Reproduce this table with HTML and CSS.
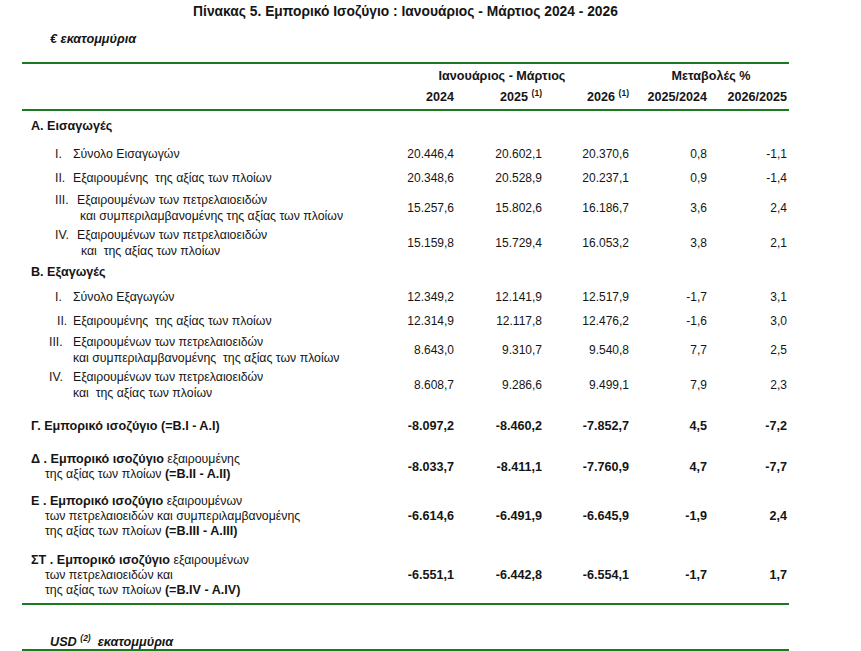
FILE: index.html
```html
<!DOCTYPE html>
<html lang="el">
<head>
<meta charset="utf-8">
<link rel="stylesheet" href="styles.css">
</head>
<body>
<div class="page">
  <h1 class="title">Πίνακας 5. Εμπορικό Ισοζύγιο : Ιανουάριος - Μάρτιος 2024 - 2026</h1>
  <div class="unit">€ εκατομμύρια</div>
  <div class="table">
    <div class="row head1">
      <div></div>
      <div class="span3">Ιανουάριος - Μάρτιος</div>
      <div class="span2">Μεταβολές %</div>
    </div>
    <div class="row head2">
      <div></div>
      <div class="num">2024</div>
      <div class="num">2025 <sup>(1)</sup></div>
      <div class="num">2026 <sup>(1)</sup></div>
      <div class="num">2025/2024</div>
      <div class="num">2026/2025</div>
    </div>

    <div class="row sec h-a"><div class="lab b">Α. Εισαγωγές</div></div>
    <div class="row h-24"><div class="lab item"><span class="rn">I.</span><span>Σύνολο Εισαγωγών</span></div><div class="num">20.446,4</div><div class="num">20.602,1</div><div class="num">20.370,6</div><div class="num">0,8</div><div class="num">-1,1</div></div>
    <div class="row h-24"><div class="lab item"><span class="rn">II.</span><span>Εξαιρουμένης&nbsp; της αξίας των πλοίων</span></div><div class="num">20.348,6</div><div class="num">20.528,9</div><div class="num">20.237,1</div><div class="num">0,9</div><div class="num">-1,4</div></div>
    <div class="row h-36"><div class="lab item"><span class="rn">III.</span><span class="txt"><span class="l1">Εξαιρουμένων των πετρελαιοειδών</span><span class="l2">και συμπεριλαμβανομένης της αξίας των πλοίων</span></span></div><div class="num">15.257,6</div><div class="num">15.802,6</div><div class="num">16.186,7</div><div class="num">3,6</div><div class="num">2,4</div></div>
    <div class="row h-33"><div class="lab item"><span class="rn">IV.</span><span class="txt"><span class="l1">Εξαιρουμένων των πετρελαιοειδών</span><span class="l2 l2b">και&nbsp; της αξίας των πλοίων</span></span></div><div class="num">15.159,8</div><div class="num">15.729,4</div><div class="num">16.053,2</div><div class="num">3,8</div><div class="num">2,1</div></div>

    <div class="row sec h-26"><div class="lab b">Β. Εξαγωγές</div></div>
    <div class="row h-24"><div class="lab item"><span class="rn">I.</span><span>Σύνολο Εξαγωγών</span></div><div class="num">12.349,2</div><div class="num">12.141,9</div><div class="num">12.517,9</div><div class="num">-1,7</div><div class="num">3,1</div></div>
    <div class="row h-24"><div class="lab item"><span class="rn rn-r">II.</span><span>Εξαιρουμένης&nbsp; της αξίας των πλοίων</span></div><div class="num">12.314,9</div><div class="num">12.117,8</div><div class="num">12.476,2</div><div class="num">-1,6</div><div class="num">3,0</div></div>
    <div class="row h-34"><div class="lab item"><span class="rn rn-l">III.</span><span class="txt"><span>Εξαιρουμένων των πετρελαιοειδών</span><span>και συμπεριλαμβανομένης&nbsp; της αξίας των πλοίων</span></span></div><div class="num">8.643,0</div><div class="num">9.310,7</div><div class="num">9.540,8</div><div class="num">7,7</div><div class="num">2,5</div></div>
    <div class="row h-36"><div class="lab item"><span class="rn rn-l">IV.</span><span class="txt"><span>Εξαιρουμένων των πετρελαιοειδών</span><span>και&nbsp; της αξίας των πλοίων</span></span></div><div class="num">8.608,7</div><div class="num">9.286,6</div><div class="num">9.499,1</div><div class="num">7,9</div><div class="num">2,3</div></div>

    <div class="row bold h-46"><div class="lab">Γ. Εμπορικό ισοζύγιο (=B.I - A.I)</div><div class="num">-8.097,2</div><div class="num">-8.460,2</div><div class="num">-7.852,7</div><div class="num">4,5</div><div class="num">-7,2</div></div>
    <div class="row bold h-36"><div class="lab multi"><span><b>Δ . Εμπορικό ισοζύγιο</b> εξαιρουμένης</span><span class="cont">της αξίας των πλοίων <b>(=B.II - A.II)</b></span></div><div class="num">-8.033,7</div><div class="num">-8.411,1</div><div class="num">-7.760,9</div><div class="num">4,7</div><div class="num">-7,7</div></div>
    <div class="row bold h-62"><div class="lab multi"><span><b>Ε . Εμπορικό ισοζύγιο</b> εξαιρουμένων</span><span class="cont">των πετρελαιοειδών και συμπεριλαμβανομένης</span><span class="cont">της αξίας των πλοίων <b>(=B.III - A.III)</b></span></div><div class="num">-6.614,6</div><div class="num">-6.491,9</div><div class="num">-6.645,9</div><div class="num">-1,9</div><div class="num">2,4</div></div>
    <div class="row bold h-56"><div class="lab multi"><span><b>ΣΤ . Εμπορικό ισοζύγιο</b> εξαιρουμένων</span><span class="cont">των πετρελαιοειδών και</span><span class="cont">της αξίας των πλοίων <b>(=B.IV - A.IV)</b></span></div><div class="num">-6.551,1</div><div class="num">-6.442,8</div><div class="num">-6.554,1</div><div class="num">-1,7</div><div class="num">1,7</div></div>
  </div>
  <div class="unit usd">USD <sup>(2)</sup>&nbsp; εκατομμύρια</div>
</div>
</body>
</html>
```

FILE: styles.css
```css
html, body {
  margin: 0;
  padding: 0;
  background: #fff;
}
body {
  font-family: "Liberation Sans", Arial, sans-serif;
  font-size: 12px;
  color: #151515;
  width: 861px;
  height: 651px;
  overflow: hidden;
}
b {
  font-size: 12.6px;
}
.page {
  padding-left: 22px;
  width: 767px;
}
.title {
  margin: 0;
  height: 24px;
  line-height: 24px;
  font-size: 13.8px;
  font-weight: bold;
  text-align: center;
}
.unit {
  height: 30px;
  line-height: 30px;
  padding-left: 28px;
  font-weight: bold;
  font-style: italic;
  font-size: 12.7px;
}
.unit sup {
  font-size: 8.5px;
  vertical-align: 5px;
  line-height: 0;
}
.table {
  margin-top: 8px;
  border-top: 2px solid #1b7a1f;
  border-bottom: 2px solid #1b7a1f;
}
.row {
  display: grid;
  grid-template-columns: 384px 48px 88px 87px 78px 80px;
  align-items: center;
}
.row .num {
  text-align: right;
}
.head1 {
  height: 22px;
  font-weight: bold;
  font-size: 12.6px;
  padding-top: 1px;
}
.head1 .span3 {
  grid-column: 2 / span 3;
  text-align: center;
  padding-right: 31px;
}
.head1 .span2 {
  grid-column: 5 / span 2;
  text-align: center;
  padding-left: 6px;
}
.head2 {
  height: 20px;
  font-weight: bold;
  font-size: 12.6px;
  border-bottom: 2px solid #1b7a1f;
  padding-bottom: 2px;
}
.head2 sup {
  font-size: 8.5px;
  vertical-align: 5px;
  line-height: 0;
}
.lab {
  grid-column: 1;
  white-space: nowrap;
  line-height: 15px;
  min-width: 0;
  font-size: 12.3px;
}
.lab.b {
  font-weight: bold;
  font-size: 12.6px;
}
.sec .lab {
  padding-left: 9px;
}
.h-a { height: 31px; }
.h-24 { height: 24px; }
.h-26 { height: 26px; }
.h-33 { height: 33px; }
.h-34 { height: 34px; }
.h-36 { height: 36px; }
.h-46 { height: 46px; }
.h-56 { height: 56px; }
.h-62 { height: 62px; }
.item {
  display: grid;
  grid-template-columns: 51px auto;
  align-items: start;
  line-height: 16px;
}
.rn {
  padding-left: 33px;
}
.rn-r {
  padding-left: 35px;
}
.rn-l {
  padding-left: 27px;
}
.txt {
  display: flex;
  flex-direction: column;
}
.l1 {
  padding-left: 4px;
}
.l2 {
  padding-left: 7px;
}
.l2b {
  padding-left: 8px;
}
.bold .num {
  font-weight: bold;
  font-size: 12.6px;
}
.bold .lab {
  padding-left: 9px;
}
.row.bold > .lab:not(.multi) {
  font-weight: bold;
  font-size: 12.6px;
}
.multi {
  display: flex;
  flex-direction: column;
}
.multi .cont {
  padding-left: 14px;
}
.usd {
  margin-top: 30px;
  height: 14px;
  line-height: 14px;
  border-bottom: 2px solid #1b7a1f;
  width: 739px;
}
```
